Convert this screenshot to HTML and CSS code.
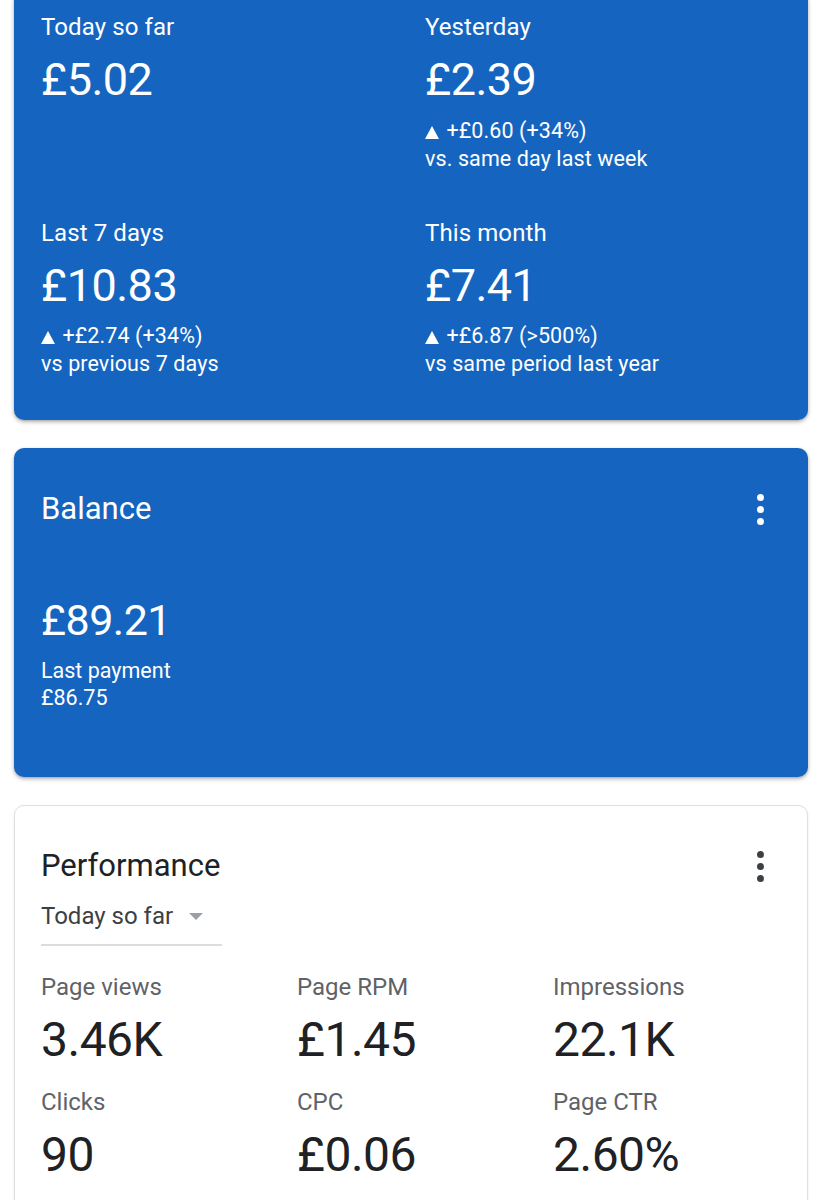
FILE: index.html
```html
<!DOCTYPE html>
<html lang="en">
<head>
<meta charset="utf-8">
<title>Earnings</title>
<link rel="stylesheet" href="styles.css">
</head>
<body>
<main class="page">
  <section class="card blue summary">
    <div class="cell">
      <div class="label">Today so far</div>
      <div class="amount">£5.02</div>
    </div>
    <div class="cell">
      <div class="label">Yesterday</div>
      <div class="amount">£2.39</div>
      <div class="change"><svg class="tri" viewBox="0 0 14 13" width="14" height="13"><polygon points="7,0 14,13 0,13" fill="#fff"/></svg> +£0.60 (+34%)</div>
      <div class="change">vs. same day last week</div>
    </div>
    <div class="cell row2">
      <div class="label">Last 7 days</div>
      <div class="amount">£10.83</div>
      <div class="change"><svg class="tri" viewBox="0 0 14 13" width="14" height="13"><polygon points="7,0 14,13 0,13" fill="#fff"/></svg> +£2.74 (+34%)</div>
      <div class="change">vs previous 7 days</div>
    </div>
    <div class="cell row2">
      <div class="label">This month</div>
      <div class="amount">£7.41</div>
      <div class="change"><svg class="tri" viewBox="0 0 14 13" width="14" height="13"><polygon points="7,0 14,13 0,13" fill="#fff"/></svg> +£6.87 (&gt;500%)</div>
      <div class="change">vs same period last year</div>
    </div>
  </section>

  <section class="card blue balance">
    <div class="head">
      <h2 class="title">Balance</h2>
      <div class="more light"><span></span><span></span><span></span></div>
    </div>
    <div class="amount bal-amount">£89.21</div>
    <div class="sub">Last payment</div>
    <div class="sub">£86.75</div>
  </section>

  <section class="card white perf">
    <div class="head">
      <h2 class="title dark">Performance</h2>
      <div class="more darkdots"><span></span><span></span><span></span></div>
    </div>
    <div class="select">
      <span class="select-text">Today so far</span>
      <svg class="caret" viewBox="0 0 14 7" width="14" height="7"><polygon points="0,0 14,0 7,7" fill="#9aa0a6"/></svg>
    </div>
    <div class="metrics">
      <div class="metric"><div class="m-label">Page views</div><div class="m-value">3.46K</div></div>
      <div class="metric"><div class="m-label">Page RPM</div><div class="m-value">£1.45</div></div>
      <div class="metric"><div class="m-label">Impressions</div><div class="m-value">22.1K</div></div>
      <div class="metric"><div class="m-label">Clicks</div><div class="m-value">90</div></div>
      <div class="metric"><div class="m-label">CPC</div><div class="m-value">£0.06</div></div>
      <div class="metric"><div class="m-label">Page CTR</div><div class="m-value">2.60%</div></div>
    </div>
  </section>
</main>
</body>
</html>
```

FILE: styles.css
```css
* { box-sizing: border-box; }
html, body {
  margin: 0;
  padding: 0;
  background: #ffffff;
  font-family: Roboto, "Noto Sans", "Liberation Sans", sans-serif;
}
.page {
  width: 821px;
  padding: 0 13px 0 14px;
  display: flex;
  flex-direction: column;
  gap: 28px;
}
.card {
  width: 794px;
  border-radius: 10px;
}
.blue {
  background: #1565c0;
  color: #ffffff;
  box-shadow: 0 2px 4px rgba(0, 0, 0, 0.28), 0 1px 2px rgba(0, 0, 0, 0.12);
}
.white {
  background: #ffffff;
  border: 1px solid #e0e0e0;
  box-shadow: 0 1px 3px rgba(0, 0, 0, 0.08);
}
.summary {
  margin-top: -10px;
  padding: 23px 27px 42px 27px;
  display: grid;
  grid-template-columns: 384px 1fr;
  row-gap: 46px;
}
.label {
  font-size: 24px;
  line-height: 28px;
  letter-spacing: 0.1px;
}
.amount {
  font-size: 45px;
  line-height: 52px;
  margin-top: 13px;
  letter-spacing: -0.5px;
}
.change {
  font-size: 21.5px;
  line-height: 28px;
  letter-spacing: 0.1px;
}
.amount + .change { margin-top: 11px; }
.row2 .amount + .change { margin-top: 10px; }
.tri {
  vertical-align: -1px;
  margin-right: 2px;
}
.balance {
  padding: 43px 27px 66px 27px;
}
.head {
  display: flex;
  justify-content: space-between;
  align-items: center;
  height: 36px;
}
.title {
  margin: 0;
  font-weight: 400;
  font-size: 31px;
  line-height: 36px;
}
.title.dark {
  color: #202124;
  font-size: 31px;
}
.more {
  width: 8px;
  margin-right: 17px;
  display: flex;
  flex-direction: column;
  align-items: center;
  gap: 5px;
}
.more span {
  width: 7px;
  height: 7px;
  border-radius: 50%;
  background: #ffffff;
}
.darkdots span { background: #3c4043; }
.bal-amount {
  margin-top: 67px;
  font-size: 43px;
}
.sub {
  font-size: 21.5px;
  line-height: 27px;
}
.bal-amount + .sub { margin-top: 11px; }
.perf {
  padding: 42px 26px 40px 26px;
}
.select {
  margin-top: 18px;
  width: 181px;
  height: 44px;
  border-bottom: 2px solid #dadce0;
  display: flex;
  align-items: flex-start;
  gap: 16px;
}
.select-text {
  font-size: 24px;
  line-height: 28px;
  color: #3c4043;
}
.caret { margin-top: 11px; }
.metrics {
  margin-top: 27px;
  display: grid;
  grid-template-columns: 256px 256px 1fr;
  row-gap: 22px;
}
.m-label {
  font-size: 24px;
  line-height: 28px;
  color: #5f6368;
}
.m-value {
  margin-top: 13px;
  font-size: 48px;
  line-height: 52px;
  color: #202124;
  letter-spacing: -0.5px;
}
```
